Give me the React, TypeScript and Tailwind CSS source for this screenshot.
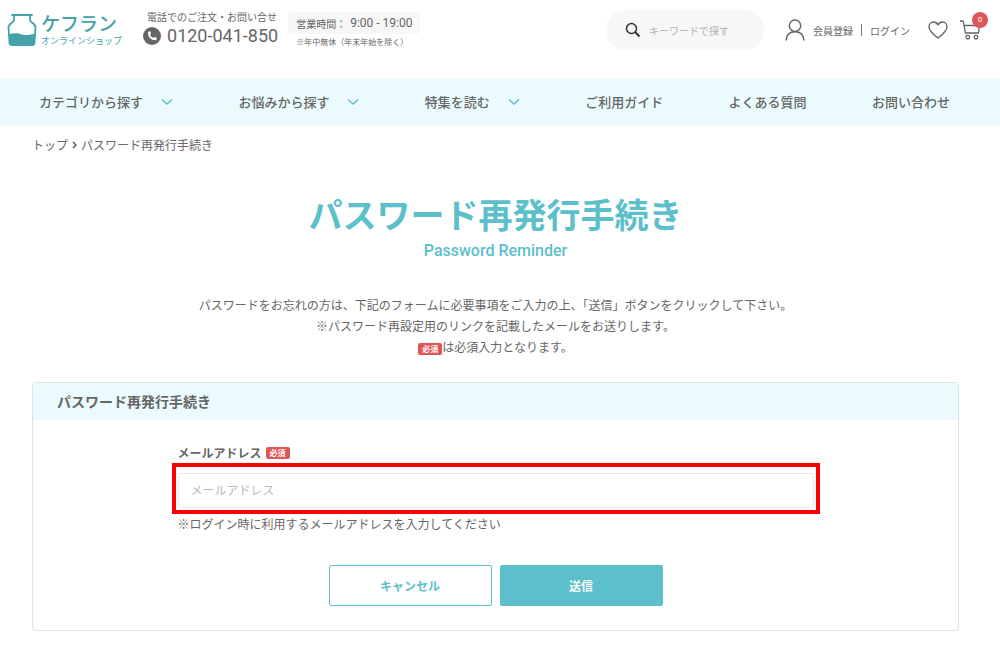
import { useState } from 'react';
import type { FormEvent } from 'react';

const navItems = [
  { label: 'カテゴリから探す', href: '#category', hasMenu: true },
  { label: 'お悩みから探す', href: '#concern', hasMenu: true },
  { label: '特集を読む', href: '#feature', hasMenu: true },
  { label: 'ご利用ガイド', href: '#guide', hasMenu: false },
  { label: 'よくある質問', href: '#faq', hasMenu: false },
  { label: 'お問い合わせ', href: '#contact', hasMenu: false },
];

function JarLogo() {
  return (
    <svg viewBox="0 0 30 34" className="h-[34px] w-[30px] shrink-0" fill="none" aria-hidden="true">
      <path
        d="M5 2h20M7 2v5.500C7 9 1.500 10.500 1.500 14L2.500 30Q2.700 32 4.500 32H25.500Q27.300 32 27.500 30L28.500 14C28.500 10.500 23 9 23 7.500V2"
        stroke="#43a3a8"
        strokeWidth="1.800"
        strokeLinecap="round"
        strokeLinejoin="round"
      />
      <path d="M2 21.500C8 19.500 11 20.500 15 21.500S23 22 28 20.500L27.500 30Q27.300 32.500 25.500 32.500H4.500Q2.700 32.500 2.500 30Z" fill="#43a3a8" />
    </svg>
  );
}

function PhoneIcon() {
  return (
    <svg viewBox="0 0 18 18" className="size-[18px] shrink-0" aria-hidden="true">
      <circle cx="9" cy="9" r="9" fill="#666" />
      <path
        d="M5.500 4.700 6.600 4.200Q7 4.100 7.200 4.500L8 6.400Q8.100 6.800 7.800 7L7 7.700Q8 9.900 10.200 11L11 10.100Q11.300 9.800 11.600 10L13.400 10.800Q13.800 11 13.700 11.400L13.300 12.900Q13.200 13.300 12.700 13.300Q5 13 4.900 5.300Q4.900 4.900 5.500 4.700Z"
        fill="#fff"
      />
    </svg>
  );
}

function SearchIcon() {
  return (
    <svg viewBox="0 0 16 16" className="size-4 shrink-0" fill="none" stroke="#333" aria-hidden="true">
      <circle cx="6.500" cy="6.500" r="5" strokeWidth="1.500" />
      <path d="m10.300 10.300 4.200 4.200" strokeWidth="2" />
    </svg>
  );
}

function UserIcon() {
  return (
    <svg viewBox="0 0 20 22" className="h-[22px] w-5 shrink-0" fill="none" stroke="#666" strokeWidth="1.500" aria-hidden="true">
      <circle cx="10" cy="6.800" r="5.700" />
      <path d="M1 21.500C1.500 16 4.500 12.800 10 12.800S18.500 16 19 21.500" />
    </svg>
  );
}

function HeartIcon() {
  return (
    <svg viewBox="0 0 20 18" className="h-[18px] w-5" fill="none" stroke="#666" strokeWidth="1.400" aria-hidden="true">
      <path d="M10 17C6 13.800 1 10.200 1 5.900C1 3 3 1 5.500 1C7.500 1 9.200 2.100 10 4C10.800 2.100 12.500 1 14.500 1C17 1 19 3 19 5.900C19 10.200 14 13.800 10 17Z" strokeLinejoin="round" />
    </svg>
  );
}

function CartIcon() {
  return (
    <svg viewBox="0 0 20 20" className="size-5" fill="none" stroke="#666" strokeWidth="1.300" aria-hidden="true">
      <path d="M0 1h2.200Q3.200 1 3.400 2L5.400 13H18.500L19.500 5.500H4.200" />
      <circle cx="7.800" cy="17.200" r="1.800" />
      <circle cx="16" cy="17.200" r="1.800" />
    </svg>
  );
}

function RequiredBadge() {
  return (
    <span className="inline-block rounded-xs bg-[#df5656] px-1 align-middle text-[8px] leading-3 font-bold text-white">必須</span>
  );
}

function Header() {
  return (
    <header className="flex h-[79px] items-start pt-2 pr-5 pl-[7px]">
      <a href="#top" className="flex items-center gap-1 pt-1 text-[#43a3a8]">
        <JarLogo />
        <span className="flex flex-col whitespace-nowrap">
          <span className="text-[19px] leading-[22px] font-medium">ケフラン</span>
          <span className="text-[9px] leading-[14px]">オンラインショップ</span>
        </span>
      </a>

      <div className="ml-[21px] flex flex-col whitespace-nowrap">
        <p className="pl-1 text-[10px] leading-[18px]">電話でのご注文・お問い合せ</p>
        <a href="tel:0120041850" className="flex items-center gap-1.5 font-[Roboto] text-[18px] leading-5">
          <PhoneIcon />
          0120-041-850
        </a>
      </div>

      <div className="ml-2.5 flex flex-col whitespace-nowrap pt-1">
        <p className="flex h-[22px] items-center gap-1 rounded-sm bg-[#f7f7f7] px-2 text-[10px]">
          営業時間：
          <span className="font-[Roboto] text-[12px]">9:00 - 19:00</span>
        </p>
        <p className="pl-2 text-[8px] leading-4">※年中無休（年末年始を除く）</p>
      </div>

      <label className="mt-0.5 ml-auto flex h-10 w-[158px] items-center gap-2 rounded-full bg-[#f7f7f7] pl-[19px]">
        <SearchIcon />
        <input
          type="search"
          aria-label="キーワードで探す"
          placeholder="キーワードで探す"
          className="w-full min-w-0 bg-transparent pr-3 text-[10px] outline-none placeholder:text-[#b3b3b3]"
        />
      </label>

      <div className="mt-0.5 ml-[21px] flex h-10 items-center whitespace-nowrap text-[10px]">
        <UserIcon />
        <a href="#register" className="ml-2">会員登録</a>
        <span className="mx-2 h-3 w-px bg-[#777]" />
        <a href="#login">ログイン</a>
        <a href="#favorite" aria-label="お気に入り" className="ml-[18px]">
          <HeartIcon />
        </a>
        <a href="#cart" aria-label="カート" className="relative ml-3">
          <CartIcon />
          <span className="absolute -top-2 -right-2 flex size-4 items-center justify-center rounded-full bg-[#df5656] font-[Roboto] text-[8px] text-white">
            0
          </span>
        </a>
      </div>
    </header>
  );
}

function GlobalNav() {
  return (
    <nav className="bg-[#ebfafc]">
      <ul className="flex h-[46px] items-center justify-between pr-[50px] pl-[39px] text-[13px] font-medium whitespace-nowrap">
        {navItems.map((item) => (
          <li key={item.label}>
            <a href={item.href} className="flex items-center gap-[18px]">
              {item.label}
              {item.hasMenu && (
                <svg viewBox="0 0 12 8" className="h-2 w-3" fill="none" stroke="#5bc0ca" strokeWidth="1.500" aria-hidden="true">
                  <path d="m1 1.500 5 4.500 5-4.500" />
                </svg>
              )}
            </a>
          </li>
        ))}
      </ul>
    </nav>
  );
}

export default function App() {
  const [email, setEmail] = useState('');

  const handleSubmit = (e: FormEvent) => {
    e.preventDefault();
  };

  return (
    <div className="min-h-screen bg-white font-['Noto_Sans_CJK_JP',sans-serif] text-[#666]" lang="ja">
      <Header />
      <GlobalNav />

      <main className="pr-[41px] pb-5 pl-8">
        <nav aria-label="パンくずリスト" className="flex items-center gap-1 pt-[11px] text-[12px] leading-[18px]">
          <a href="#top">トップ</a>
          <svg viewBox="0 0 5 8" className="h-2 w-[5px]" fill="none" stroke="#444" strokeWidth="1.200" aria-hidden="true">
            <path d="m1 1 3 3-3 3" />
          </svg>
          <span>パスワード再発行手続き</span>
        </nav>

        <div className="mt-10 text-center text-[#5bc0ca]">
          <h1 className="text-[34px] leading-10 font-bold">パスワード再発行手続き</h1>
          <p className="mt-[7px] font-[Roboto] text-[16px] leading-5 font-medium">Password Reminder</p>
        </div>

        <div className="mt-[33px] text-center text-[12px] leading-[21px]">
          <p>パスワードをお忘れの方は、下記のフォームに必要事項をご入力の上、「送信」ボタンをクリックして下さい。</p>
          <p>※パスワード再設定用のリンクを記載したメールをお送りします。</p>
          <p>
            <RequiredBadge />
            は必須入力となります。
          </p>
        </div>

        <section className="mt-[25px] overflow-hidden rounded-sm border border-[#dfe3e4]">
          <h2 className="bg-[#ebfafc] px-6 py-2 text-[14px] leading-[21px] font-bold">パスワード再発行手続き</h2>

          <form onSubmit={handleSubmit} className="mx-auto max-w-[648px] pt-6 pb-6">
            <label htmlFor="email" className="flex items-center gap-1 px-1.5 text-[12px] leading-[18px] font-bold">
              メールアドレス
              <RequiredBadge />
            </label>
            <div className="mt-px border-4 border-[#ff0000] px-0.5 pt-1.5 pb-0.5">
              <input
                id="email"
                type="email"
                value={email}
                onChange={(e) => setEmail(e.target.value)}
                placeholder="メールアドレス"
                className="block h-[35px] w-full rounded-xs border border-[#e8e8e8] px-3 pb-0.5 text-[12px] outline-none placeholder:text-[#bbb]"
              />
            </div>
            <p className="mt-px px-1.5 text-[12px] leading-[18px]">※ログイン時に利用するメールアドレスを入力してください</p>

            <div className="mt-8 flex justify-center gap-2 text-[12px] font-bold">
              <button type="button" className="h-[41px] w-[163px] rounded-xs border border-[#5bc0ca] bg-white text-[#5bc0ca]">
                キャンセル
              </button>
              <button type="submit" className="h-[41px] w-[163px] rounded-xs bg-[#5bc0ca] text-white">
                送信
              </button>
            </div>
          </form>
        </section>
      </main>
    </div>
  );
}
